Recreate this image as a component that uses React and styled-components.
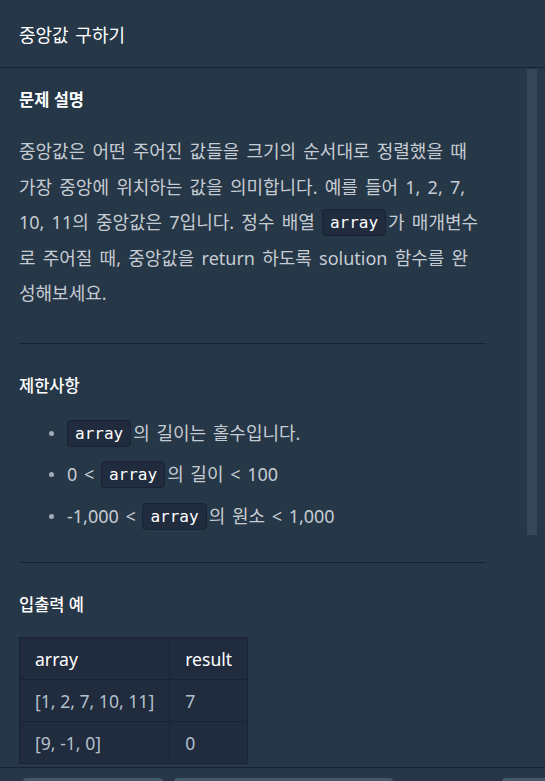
import React from "react";
import styled, { createGlobalStyle } from "styled-components";

const GlobalStyle = createGlobalStyle`
  html, body {
    margin: 0;
    padding: 0;
    background: #263747;
    font-family: "Noto Sans", "Noto Sans CJK KR", sans-serif;
  }
`;

const Page = styled.div`
  display: flex;
  flex-direction: column;
  height: 100vh;
  overflow: hidden;
  background: #263747;
`;

const Header = styled.header`
  flex: none;
  height: 67px;
  display: flex;
  align-items: center;
  padding: 0 19px;
  border-bottom: 1px solid #172334;
`;

const Title = styled.h1`
  margin: 0;
  font-size: 18px;
  font-weight: 400;
  word-spacing: 2px;
  color: #ffffff;
`;

const Viewport = styled.div`
  position: relative;
  flex: none;
  height: 699px;
`;

const Body = styled.div`
  height: 100%;
  overflow: hidden;
  padding: 20px 59px 0 19px;
  box-sizing: border-box;
`;

const Thumb = styled.div`
  position: absolute;
  top: 1px;
  right: 8px;
  width: 10px;
  height: 466px;
  background: #37475a;
`;

const Heading = styled.h5`
  margin: 0;
  font-size: 16.5px;
  line-height: 24px;
  font-weight: ${(p) => (p.bold ? 700 : 500)};
  color: #ffffff;
`;

const Paragraph = styled.p`
  margin: 22px 0 0;
  font-size: 18px;
  line-height: 35.5px;
  word-spacing: 2.5px;
  white-space: nowrap;
  color: #c6ccd3;
`;

const Code = styled.code`
  display: inline-block;
  font-family: "DejaVu Sans Mono", "Liberation Mono", monospace;
  font-size: 16px;
  line-height: 25px;
  padding: 0 7px;
  margin-right: 2px;
  word-spacing: 0;
  color: #ffffff;
  background: #202b3d;
  border: 1px solid #172334;
  border-radius: 4px;
  vertical-align: 1px;
`;

const Divider = styled.hr`
  margin: ${(p) => p.gap || 31}px 0 30px;
  border: 0;
  border-top: 1px solid #172334;
`;

const List = styled.ul`
  margin: 15px 0 0;
  padding: 0 0 0 48px;
  list-style: none;
`;

const Item = styled.li`
  position: relative;
  font-size: 18px;
  line-height: 41.5px;
  word-spacing: 2px;
  color: #c6ccd3;

  &::before {
    content: "";
    position: absolute;
    left: -18px;
    top: 18px;
    width: 5px;
    height: 5px;
    border-radius: 50%;
    background: #a3adb8;
  }
`;

const Table = styled.table`
  margin-top: 20px;
  border-collapse: collapse;
  background: #202b3d;
`;

const Cell = styled.td`
  border: 1px solid #172334;
  padding: 0 15px;
  height: 41px;
  font-size: 17.6px;
  white-space: nowrap;
  color: ${(p) => (p.head ? "#ffffff" : "#b2c0cc")};
`;

const Footer = styled.footer`
  flex: none;
  height: 60px;
  border-top: 1px solid #172334;
  display: flex;
  gap: 11px;
  padding: 10px 0 0 23px;
  box-sizing: border-box;
  overflow: hidden;
`;

const Button = styled.button`
  flex: none;
  width: ${(p) => p.w}px;
  height: 40px;
  margin-left: ${(p) => p.ml || 0}px;
  border: 0;
  border-radius: 4px;
  background: #44576c;
  color: #ffffff;
  font-family: inherit;
  font-size: 14px;
`;

const rows = [
  ["[1, 2, 7, 10, 11]", "7"],
  ["[9, -1, 0]", "0"],
];

export default function App() {
  return (
    <Page>
      <GlobalStyle />
      <Header>
        <Title>중앙값 구하기</Title>
      </Header>
      <Viewport>
        <Body>
          <Heading bold>문제 설명</Heading>
          <Paragraph>
            중앙값은 어떤 주어진 값들을 크기의 순서대로 정렬했을 때<br />
            가장 중앙에 위치하는 값을 의미합니다. 예를 들어 1, 2, 7,<br />
            10, 11의 중앙값은 7입니다. 정수 배열 <Code>array</Code>가 매개변수<br />
            로 주어질 때, 중앙값을 return 하도록 solution 함수를 완<br />
            성해보세요.
          </Paragraph>
          <Divider />
          <Heading>제한사항</Heading>
          <List>
            <Item>
              <Code>array</Code>의 길이는 홀수입니다.
            </Item>
            <Item>
              0 &lt; <Code>array</Code>의 길이 &lt; 100
            </Item>
            <Item>
              -1,000 &lt; <Code>array</Code>의 원소 &lt; 1,000
            </Item>
          </List>
          <Divider gap={25} />
          <Heading>입출력 예</Heading>
          <Table>
            <tbody>
              <tr>
                <Cell head>array</Cell>
                <Cell head>result</Cell>
              </tr>
              {rows.map((r) => (
                <tr key={r[0]}>
                  <Cell>{r[0]}</Cell>
                  <Cell>{r[1]}</Cell>
                </tr>
              ))}
            </tbody>
          </Table>
          <Divider />
          <Heading>입출력 예 설명</Heading>
          <Paragraph>입출력 예 #1</Paragraph>
        </Body>
        <Thumb />
      </Viewport>
      <Footer>
        <Button w={140}>질문하기 (5)</Button>
        <Button w={219}>테스트 케이스 추가하기</Button>
        <Button w={120} ml={98}>
          초기화
        </Button>
      </Footer>
    </Page>
  );
}
